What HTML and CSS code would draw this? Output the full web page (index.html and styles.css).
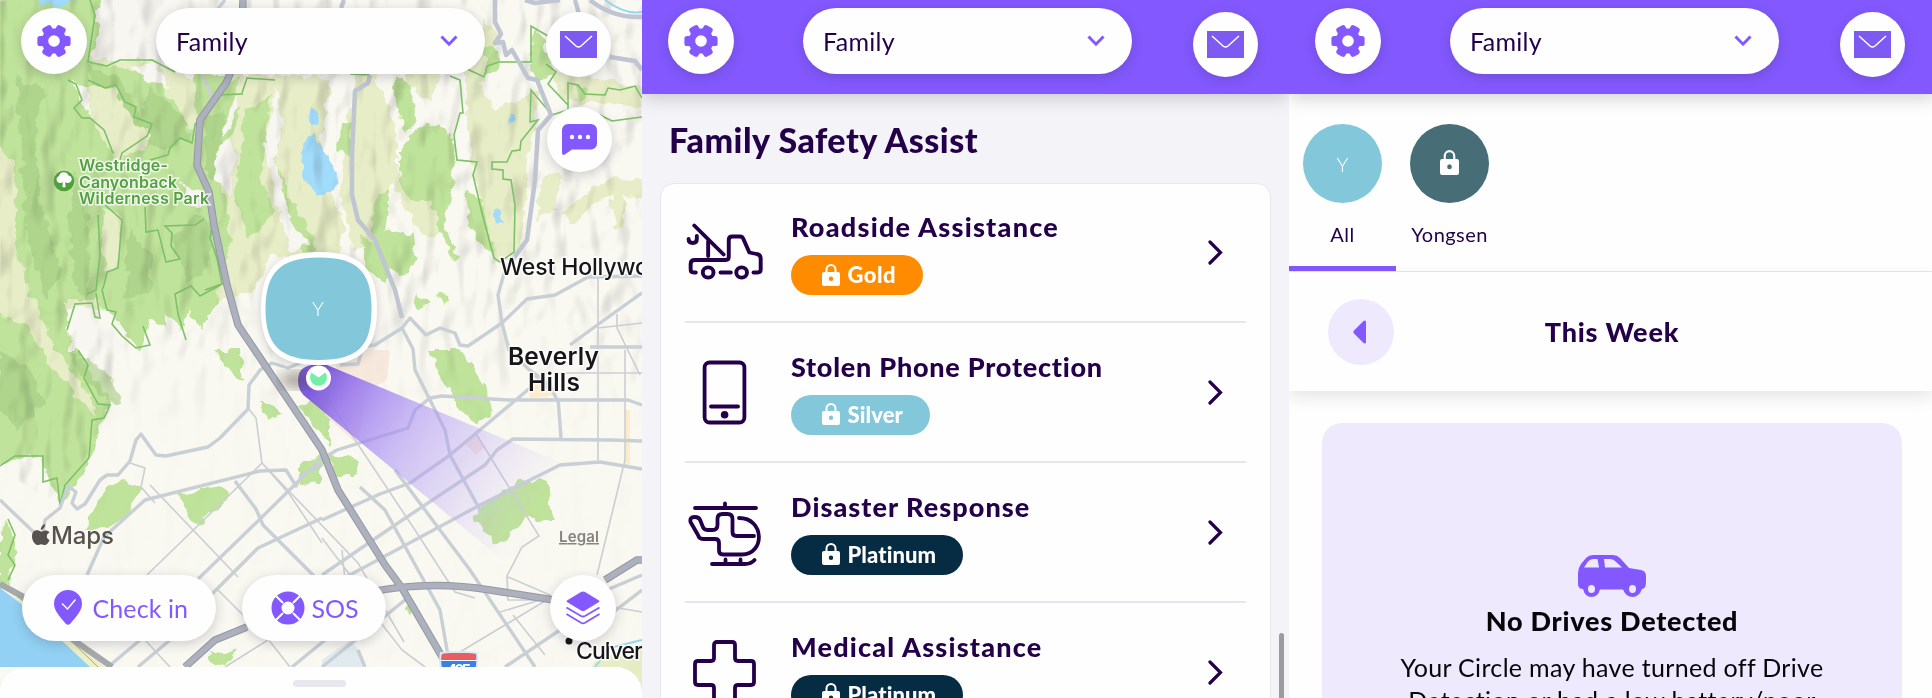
FILE: index.html
```html
<!DOCTYPE html>
<html lang="en">
<head>
<meta charset="utf-8">
<title>Family</title>
<link rel="stylesheet" href="styles.css">
</head>
<body>
<svg class="defs" width="0" height="0" aria-hidden="true">
  <symbol id="gear" viewBox="-17 -17 34 34">
    <g fill="#8359ff"><circle r="12.500"/>
      <rect x="-5" y="-16.600" width="10" height="33.200" rx="2.600" transform="rotate(90)"/>
      <rect x="-5" y="-16.600" width="10" height="33.200" rx="2.600" transform="rotate(30)"/>
      <rect x="-5" y="-16.600" width="10" height="33.200" rx="2.600" transform="rotate(150)"/></g>
    <circle r="5.800" fill="#fff"/>
  </symbol>
  <symbol id="mail" viewBox="0 0 37 27"><rect width="37" height="27" fill="#7d5af2"/><path d="M5 5l11 10q2.500 2 5 0L32 5" fill="none" stroke="#fff" stroke-width="1.500"/></symbol>
  <symbol id="down" viewBox="0 0 18 12"><path d="M1.500 1.500L9 9.200l7.500-7.700" fill="none" stroke="#8359ff" stroke-width="3"/></symbol>
  <symbol id="next" viewBox="0 0 15 25"><path d="M2 2l10.500 10.500L2 23" fill="none" stroke="#230049" stroke-width="3.200" stroke-linecap="round"/></symbol>
  <symbol id="lock" viewBox="0 0 18 22"><rect y="8" width="18" height="14" rx="2" fill="#fff"/><path d="M4.500 9V5.500a4.500 4.500 0 0 1 9 0V9" fill="none" stroke="#fff" stroke-width="2"/><circle class="hole" cx="9" cy="14.800" r="2.200"/></symbol>
</svg>
<main class="screens">
  <section class="screen map-screen">
    <svg class="map" width="642" height="698" viewBox="0 0 642 698">
      <defs>
        <filter id="rough" filterUnits="userSpaceOnUse" x="-30" y="-30" width="702" height="758"><feTurbulence type="fractalNoise" baseFrequency="0.09" numOctaves="2" seed="4"/><feDisplacementMap in="SourceGraphic" scale="12" xChannelSelector="R" yChannelSelector="G"/></filter>
        <filter id="relief" x="0" y="0" width="100%" height="100%" color-interpolation-filters="sRGB"><feTurbulence type="fractalNoise" baseFrequency="0.04 0.022" numOctaves="2" seed="9"/><feDiffuseLighting surfaceScale="11" diffuseConstant="1.200" lighting-color="#fff"><feDistantLight azimuth="215" elevation="58"/></feDiffuseLighting></filter>
        <filter id="soft"><feGaussianBlur stdDeviation="6"/></filter>
        <linearGradient id="cone" gradientUnits="userSpaceOnUse" x1="318" y1="379" x2="532" y2="515"><stop stop-color="#7f5cdc"/><stop offset=".14" stop-color="#9573ee" stop-opacity=".85"/><stop offset=".4" stop-color="#a990f6" stop-opacity=".58"/><stop offset="1" stop-color="#c4b2ff" stop-opacity="0"/></linearGradient>
        <linearGradient id="fade" x1="0" y1="0" x2="0" y2="1"><stop offset=".38" stop-color="#fff"/><stop offset=".62" stop-color="#111"/></linearGradient>
        <mask id="hills"><rect width="642" height="698" fill="url(#fade)"/><path d="M0 300H60L120 360 110 410 60 505 0 470z" fill="#fff"/><path d="M0 0H330V250H0z" fill="#fff"/></mask>
      </defs>
      <rect width="642" height="698" fill="#f9f8f1"/>
      <g filter="url(#rough)">
        <path d="M-25-25H105V10H-25z" fill="#bfe39a"/>
        <g fill="#e7edc6">
          <path d="M-25 0H90L95 60 150 60 190 80 235 75 300 75 330 80 320 150 345 230 330 280 300 260 270 255 255 290 225 300 200 300 170 310 110 310 60 310 100 420 80 420 -25 300z"/>
          <path d="M355 75L375 75 395 120 400 180 430 180 440 230 425 240 390 180 385 240 355 250 340 190z"/>
          <path d="M400 55L440 75 430 105 405 80zM485 20L500 40 480 80 495 110 540 90 530 150 520 250 495 265 470 160 465 80z"/>
          <path d="M550 70L665 90 665 110 560 100zM540 180L560 172 555 210 538 220zM560 215L590 190 610 178 665 180 665 205 625 195 625 225 615 228 610 195 590 205 575 225z"/>
          <path d="M595 660L665 640 665 720 580 720z"/>
        </g>
        <g fill="#bfe39a">
          <path d="M-25 20L15-5H88L100 30 88 62 150 75 180 110 195 140 195 70 240 80 235 110 200 105 200 200 215 250 220 300 200 330 190 310 180 330 150 320 140 350 115 320 98 300 66 300 68 340 85 360 110 402 100 425 88 465 62 505 45 475 40 455 -25 470V300L30 330 50 345 25 290 15 230 15 160 -25 145z"/>
          <path d="M200 95L235 95 240 120 215 170 225 200 230 240 218 285 208 240 197 180z"/>
          <path d="M245 110L270 95 262 180 275 210 250 240 235 200 240 150zM275 160L290 200 320 250 310 255 285 230zM340 125L352 122 350 155 338 150z"/>
          <path d="M395 75L410 85 418 120 405 135 395 100zM415 130L440 122 455 140 452 190 445 220 458 260 455 265 440 230 430 200 410 200 400 185 400 150z"/>
          <path d="M378 190L390 190 385 230 415 235 418 260 400 275 380 260 370 225zM360 235L375 240 392 270 385 282 365 270z"/>
          <path d="M465 190L480 200 490 240 495 255 485 250 470 225zM485 45L498 50 500 70 485 75zM535 28L548 50 555 75 540 80 530 70zM575 85L590 90 578 100z"/>
          <path d="M415 295L430 302 420 308zM437 295L448 296 447 305z"/>
          <path d="M428 350L460 350 485 385 492 410 475 425 460 410 445 385zM215 350L240 350 243 380 230 370z"/>
          <path d="M105 485L120 480 142 488 118 525 85 530zM178 495L220 484 230 495 200 525 190 520zM260 405L275 403 280 415 270 420zM300 465L322 455 322 480 300 485zM298 405L330 395 330 445z"/>
          <path d="M0 530L8 520 15 545 10 585 0 590zM210 650L235 652 225 665 212 662zM472 515L520 480 550 480 550 510 555 520 525 520 495 545zM403 610L413 605 410 615zM330 455L360 460 355 475 335 475z"/>
        </g>
        <g fill="#a5cc83" opacity=".6">
          <path d="M15 75L45 90 35 130 40 200 60 270 45 300 25 230 22 150zM88 65L115 75 140 110 150 145 125 150 110 120 95 95zM150 85L185 120 190 140 155 150 138 125zM75 170L90 230 88 300 75 285 68 220zM130 230L150 255 150 290 125 300z"/>
          <path d="M170 240L195 215 215 225 205 270 190 285zM0 350L30 370 45 400 20 430 0 410zM70 350L110 375 122 405 105 400 80 375zM205 120L225 110 220 180 205 180z"/>
        </g>
        <path d="M82 85L115 88 135 125 150 133 145 150 125 155 120 165 95 125zM105 205L122 222 116 268 105 272 102 240zM0 145L12 165 14 240 30 290 52 345 90 395 95 415 80 400 55 372 40 345 0 300z" fill="#e7edc6"/>
        <g fill="#f8f6f1">
          <path d="M100-25H245L235 60 180 65 150 58 98 60 102 25zM128 68L155 62 170 90 150 82z"/>
          <path d="M72 82L85 85 92 112 84 108zM230 140L235 155 230 195 215 180 220 145zM240 95L230 130 222 138 230 105z"/>
          <path d="M275 85L282 120 275 160 290 220 310 245 290 250 275 200 265 150zM75 308L93 305 100 325 110 325 130 350 70 350zM165 315L180 325 178 340 165 330zM182 184L200 190 210 205 190 206z"/>
        </g>
        <g fill="#a2dcfb"><path d="M32-10H80L65 8 45 5zM308 112L315 106 318 122 310 125zM302 145L314 132 325 155 336 170 335 190 320 196 305 180zM507 118L512 114 514 122 508 124zM494 208L502 210 505 223 497 222z"/></g>
      </g>
      <rect width="642" height="698" class="relief" filter="url(#relief)" mask="url(#hills)"/>
      <g id="edges" class="boundary">
        <path d="M90 0L95 15 88 62 107 66 120 60 152 60 175 72M205 290L222 284M242 93L247 78 275 80M350 74L370 75"/>
        <path d="M88 80L105 88 116 85 125 102 136 107 134 117 152 124 147 136 122 153 120 160M68 80L76 84 82 100 74 108 82 118 90 118 104 130 113 153M150 160L168 155 170 148 180 138 192 143 195 125 215 95 243 94"/>
        <path d="M98 215L100 255 96 290 87 294M105 205L122 220 118 268 107 272 104 285 102 290 107 310 116 312 112 324 122 336 136 348 150 345 143 326M145 207L146 232 158 230 166 262 180 259 171 246 172 233 165 226 195 225 204 219M215 210L210 238 217 258 222 284 200 296 191 286 175 294 178 314 186 340M67 330L75 304 92 303 95 317 100 318 96 293"/>
        <path d="M450 76L460 80 463 113 460 113 454 135 457 160 477 162 473 175 482 213 494 258 500 262 514 252 515 205 511 180 503 179 503 170 492 169 492 162 507 162 512 151 520 150 521 141 538 120 530 122 531 90 552 115 568 110 568 83 578 85 585 94 605 95 608 88 620 90 635 86 642 98M465 68L484 77 487 66 499 62 531 62 531 26 548 36M546 64L556 72 548 84 568 105M600 115L612 121 642 117"/>
        <path d="M78 350L88 365 84 378 98 404 110 405 104 418 92 420 89 458 65 485 60 505 57 478 43 482 43 456 15 456 0 466M8 519L15 535 8 555 15 565 8 580M0 590L85 667"/>
      </g>
      <use href="#edges" class="halo"/>
      <path d="M0 588L50 625 92 667 0 667z" fill="#92d1f3"/><path d="M0 585L65 633 105 667H90L45 625z" fill="#eeedc8"/><path d="M0 583L60 630 98 667" fill="none" stroke="#8ab974"/>
      <path d="M322 660L350 640 358 650 363 667H322z" fill="#e1ebef"/>
      <path d="M340 350L390 350 387 380 365 392 358 445 325 415z" fill="#f6e4d5" opacity=".75"/>
      <path d="M466 445L475 433 485 447 476 455z" fill="#f6e4d5"/><path d="M625 410h5v55h-5zM528 385l15-8 12 18-25 3z" fill="#fdeccb"/>
      <path d="M605 0Q625 15 642 12M595 667L610 648 642 640" stroke="#94d7ef" stroke-width="2" fill="none"/>
      <g class="minor">
        <path d="M147 575L250 475 262 463M150 485L238 577M130 463L145 468 141 487 155 503M248 408L256 418 262 463 290 495 322 543M262 463L358 563 404 642M325 395L415 530 455 592 475 598M145 640L170 667M218 590L245 617M322 538L350 575M268 639L290 667M225 667L268 640M363 600L402 650 425 667M455 655L560 592M598 277V460M625 350V460L597 575M560 373H642M598 328L642 323M617 314V328L640 375M475 432L539 536 522 547 507 576 508 600H560M508 577L550 595 540 600 500 612M513 615L545 655M595 604L642 612M342 550L345 580 358 600"/>
      </g>
      <g class="street">
        <path d="M0 500L42 540 45 520 60 508 68 486 76 492 72 503 77 509 85 504 100 480 107 475 118 475 130 461 136 440 141 434 148 444 156 455 166 456 208 447 220 438 248 409 249 385 258 373 260 370 272 363 288 368 305 361 322 364"/>
        <path d="M87 575L104 537 145 500 260 471 286 470 296 486 302 475 322 465M322 520L380 494 410 483 450 455 530 388M195 582L260 519 320 460 337 450 408 428 415 410 430 398 442 396 508 400 628 400 642 405M211 595L258 548 322 518M235 481L256 509 263 525 315 577M360 487L385 510 440 610 450 667M395 470L470 570 535 667M108 667L140 640M138 667L170 640M292 667L325 640M322 575L395 525 485 465 497 450 513 439 610 440 642 441M322 590L480 505 560 465 600 462 642 469M322 667L405 600M505 667L560 630M558 398L561 438M557 400L550 385 530 370M560 610L642 575M590 630L642 590"/>
        <path d="M225 0L217 10M203 75L212 98M358 650L365 667M340 365L358 364 362 350M402 328L410 318 426 335 440 328 455 333 460 345 468 346 502 323 498 295 505 270M340 350L375 345 402 328M402 328L413 349 415 370 430 400 445 430 450 455 480 510M502 323L527 299 555 295 588 277 642 276M570 345L600 323 642 293M502 323L509 350 550 390M590 347H642"/>
      </g>
      <g class="main">
        <path d="M344 0L341 8M495 0L495 22 501 34 495 43 503 42 506 55 512 50 528 78 537 80 551 115 538 130 535 180 527 240 505 270M370 75L368 83 355 91 352 155 352 195 358 220 375 240 395 290 402 318M525 0L535 3 560 0M575 0L579 14M590 0Q612 18 642 17M610 57L635 61 642 70"/>
      </g>
      <g class="freeway-edge"><path d="M243 0L241 50 226 83 200 120 197 165 209 192 214 225 227 285 238 325 322 450 338 490 385 565 402 588 448 667M370 592Q430 580 490 590L560 601M185 667L215 640 247 627M605 580L637 560H642"/></g>
      <g class="freeway"><path d="M243 0L241 50 226 83 200 120 197 165 209 192 214 225 227 285 238 325 322 450 338 490 385 565 402 588 448 667M370 592Q430 580 490 590L560 601M185 667L215 640 247 627M605 580L637 560H642"/></g>
      <path d="M0 584L22 596 62 632 112 667" fill="none" stroke="#a5a9ac" stroke-width="6"/>
      <path d="M327 365L560 462Q585 490 505 562L307 398Q295 389 299 374Q303 362 327 365z" fill="url(#cone)"/>
      <ellipse cx="296" cy="380" rx="16" ry="9" fill="#443a30" opacity=".4" filter="url(#soft)"/>
      <path d="M319 252C361 252 377 269 377 309S361 365 319 365 261 349 261 309 277 252 319 252z" fill="#fff" class="pin"/>
      <path d="M319 257.500C358 257.500 371.500 272 371.500 309S358 360 319 360 265.500 345 265.500 309 280 257.500 319 257.500z" fill="#83c7da"/>
      <circle cx="318.500" cy="378" r="12.500" fill="#fff"/><path d="M311.500 372.500l7 5 7-5a8.500 8.500 0 1 1-14 0z" fill="#74efa6"/>
      <text x="312" y="316" class="initial">Y</text>
      <circle cx="64" cy="181" r="10.300" fill="#4f9f3d"/><path d="M57.500 182a3.700 3.700 0 0 1 1.500-6 5 5 0 0 1 9.500-.5 3.700 3.700 0 0 1 2 6.500q-3 2-5.400.300l.5 5h-3.200l.4-5q-2.600 1.600-5.300-.3z" fill="#fff"/>
      <g class="park"><text x="79" y="171" textLength="89">Westridge-</text><text x="79" y="187.500" textLength="98">Canyonback</text><text x="79" y="204" textLength="130">Wilderness Park</text></g>
      <g class="city"><text x="500" y="274.500" textLength="149">West Hollywo</text><text x="508" y="365" textLength="91">Beverly</text><text x="528" y="391" textLength="52">Hills</text><text x="576" y="659" textLength="67">Culver</text></g>
      <circle cx="569" cy="641" r="3.500" fill="#16151a"/>
      <path d="M441 653q18-2 36 0 1 8-1 20h-34q-3-12-1-20z" fill="#3b80e6" stroke="#dce8f5" stroke-width="2"/><path d="M442 654q17-2 34 0v6h-34z" fill="#e65e60"/><path d="M441 660.500h36" stroke="#fff"/>
      <text x="447" y="675" class="shield" textLength="24">405</text>
      <path d="M40.500 531.500C38 529.500 32 529.500 32 536.500c0 4 3 8.500 5.500 8.500 1.500 0 2-.8 3.700-.8s2 .8 3.800.8c2 0 3.800-3 4.500-5-3.600-1.700-3.500-6 0-7.600-2-2.600-5.500-2.400-7-1zM40.700 530c0-3 1.700-5.200 4.300-6 .2 3-1.700 5.500-4.300 6z" fill="#56534e"/>
      <text x="51" y="544" class="brand" textLength="63">Maps</text>
      <text x="559" y="542" class="legal" textLength="40">Legal</text>
    </svg>
    <div class="stack">
      <header class="bar"><span class="round"><svg width="34" height="34"><use href="#gear"/></svg></span><div class="picker"><span>Family</span><svg width="18" height="12"><use href="#down"/></svg></div><span class="round low"><svg width="37" height="27"><use href="#mail"/></svg></span></header>
      <div class="chat-row"><span class="round"><svg width="35" height="31" viewBox="0 0 35 31"><path d="M6 0h23a6 6 0 0 1 6 6v13.500a6 6 0 0 1-6 6H10L2 31q-2 0-2-2V6a6 6 0 0 1 6-6z" fill="#8359ff"/><g fill="#fff"><circle cx="10" cy="13" r="2.200"/><circle cx="18" cy="13" r="2.200"/><circle cx="26" cy="13" r="2.200"/></g></svg></span></div>
      <div class="actions">
        <button class="pill check"><svg width="28" height="35" viewBox="0 0 28 35"><path d="M14 0a14 14 0 0 1 14 14c0 7-7 14-11.500 19.500q-2.500 2.500-5 0C7 28 0 21 0 14A14 14 0 0 1 14 0z" fill="#8359ff"/><path d="M8 13.500l5.500 5.500 8-9.500" fill="none" stroke="#fff" stroke-width="1.400"/></svg><span>Check in</span></button>
        <button class="pill sos"><svg width="34" height="34" viewBox="-17 -17 34 34"><circle r="11.500" fill="none" stroke="#8359ff" stroke-width="10"/><path d="M-12-12l7 7M12-12l-7 7M-12 12l7-7M12 12l-7-7" stroke="#fff" stroke-width="2"/></svg><span>SOS</span></button>
        <button class="round layers"><svg width="34" height="34" viewBox="0 0 34 34"><path d="M17 .5q1 0 2 .6L33 9.500q1 .8 0 1.600L19 19.500q-2 1-4 0L1 11.100q-1-.8 0-1.600l14-8.400q1-.6 2-.6z" fill="#8359ff"/><path d="M.5 16.500L15 25q2 1 4 0l14.500-8.500M.5 23L15 31.800q2 1 4 0L33.500 23" fill="none" stroke="#8359ff" stroke-width="1.800"/></svg></button>
      </div>
      <div class="sheet"><i></i></div>
    </div>
  </section>

  <section class="screen safety">
    <header class="bar solid"><span class="round"><svg width="34" height="34"><use href="#gear"/></svg></span><div class="picker"><span>Family</span><svg width="18" height="12"><use href="#down"/></svg></div><span class="round low"><svg width="37" height="27"><use href="#mail"/></svg></span></header>
    <h1>Family Safety Assist</h1>
    <div class="card">
      <article><svg class="icon" width="78" height="66" viewBox="0 0 78 66"><g class="line" transform="translate(.5 0) scale(1.030 1)"><path d="M8.500 4.500L37 33.500M22 20V35M3 18q0 4 4 4t4-4V15M10 51.500H8q-3 0-3-3V43q0-4 4-4h30q3 0 3-3V19q0-3.500 3.500-3.500H53q2 0 3 2l6 14 7 1.500q4 .5 4 4.500V48.500q0 3-3 3H66M34 51.500H44"/><circle cx="22" cy="51.500" r="5.200"/><circle cx="54.500" cy="51.500" r="5.200"/></g></svg><div class="copy"><h2 class="t1">Roadside Assistance</h2><span class="badge gold"><svg width="18" height="22"><use href="#lock"/></svg>Gold</span></div><svg class="go" width="15" height="25"><use href="#next"/></svg></article>
      <article><svg class="icon" width="78" height="66" viewBox="0 0 78 66"><g class="line"><rect x="19.600" y="1.500" width="39.800" height="60" rx="5"/><path d="M26 45.500H53"/></g><circle cx="39.600" cy="53.800" r="3.800" fill="#230049"/></svg><div class="copy"><h2 class="t2">Stolen Phone Protection</h2><span class="badge silver"><svg width="18" height="22"><use href="#lock"/></svg>Silver</span></div><svg class="go" width="15" height="25"><use href="#next"/></svg></article>
      <article><svg class="icon" width="78" height="66" viewBox="0 0 78 66"><g class="line"><path d="M10 7H71M40 2.500V7M54 17C80 17 80 53.500 57 53.500H38q-4 0-4-4V42q0-4-4-4H18q-4 0-5-4L5.500 21q-1-5 4-5 5 0 6 4l2 5q1 4 5 4h5q5 0 5-5V18q0-5 5-5h5q5 0 5 5V31q0 4 4 4H69M27 63H60q6 0 9.500-4M40.500 58.500V63M55.500 58.500V63"/></g></svg><div class="copy"><h2 class="t3">Disaster Response</h2><span class="badge platinum"><svg width="18" height="22"><use href="#lock"/></svg>Platinum</span></div><svg class="go" width="15" height="25"><use href="#next"/></svg></article>
      <article><svg class="icon" width="78" height="66" viewBox="0 0 78 66"><g class="line"><path d="M32 1H47q3 0 3 3V17q0 3 3 3H66q3 0 3 3V41q0 3-3 3H53q-3 0-3 3V60q0 3-3 3H32q-3 0-3-3V47q0-3-3-3H13q-3 0-3-3V23q0-3 3-3H26q3 0 3-3V4q0-3 3-3z"/></g></svg><div class="copy"><h2 class="t4">Medical Assistance</h2><span class="badge platinum"><svg width="18" height="22"><use href="#lock"/></svg>Platinum</span></div><svg class="go" width="15" height="25"><use href="#next"/></svg></article>
    </div>
    <i class="scrollbar"></i>
  </section>

  <section class="screen drives">
    <header class="bar solid"><span class="round"><svg width="34" height="34"><use href="#gear"/></svg></span><div class="picker"><span>Family</span><svg width="18" height="12"><use href="#down"/></svg></div><span class="round low"><svg width="37" height="27"><use href="#mail"/></svg></span></header>
    <nav class="people"><div class="person active"><span class="avatar">Y</span><b>All</b></div><div class="person"><span class="avatar locked"><svg width="19" height="25" viewBox="0 0 18 22" preserveAspectRatio="none"><use href="#lock"/></svg></span><b>Yongsen</b></div></nav>
    <div class="week"><span class="back"><svg width="13" height="24" viewBox="0 0 13 24"><path d="M13 1.500V22.500q-1 1.500-2.500.5L1 13.500q-1.500-1.500 0-3L10.500 1Q12 0 13 1.500z" fill="#8359ff"/></svg></span><h2>This Week</h2></div>
    <div class="empty">
      <svg width="68" height="42" viewBox="0 0 68 42"><path fill-rule="evenodd" d="M15 0h20q4 0 7 3l9 10 12 2q5 1 5 6v6q0 7-4 7-3 8-9.500 8T45 34.500H22Q20 42 13.500 42T5 34Q0 34 0 29V18Q0 13 3 9L8 3q3-3 7-3zM6 12.500H21L19.500 4H15q-3 0-5 2.500zM27 12.500H44L37 6q-2-2-5-2h-6zM17 34a3.500 4 0 1 0-7 0 3.500 4 0 1 0 7 0zM58 34a3.500 4 0 1 0-7 0 3.500 4 0 1 0 7 0z" fill="#8359ff"/></svg>
      <h3>No Drives Detected</h3>
      <p><span>Your Circle may have turned off Drive</span><span>Detection or had a low battery/poor</span></p>
    </div>
  </section>
</main>
</body>
</html>
```
FILE: styles.css
```css
* { box-sizing: border-box; }
body { margin: 0; width: 1932px; height: 698px; overflow: hidden; font-family: Lato, "Liberation Sans", sans-serif; color: #230049; font-variant-ligatures: none; }
h1, h2, h3, p { margin: 0; }
svg { display: block; flex: none; overflow: visible; }
.defs { position: absolute; }
.screens { display: grid; grid-template-columns: 642px 647px 643px; height: 698px; }
.screen { position: relative; height: 698px; overflow: hidden; display: flex; flex-direction: column; }

.bar { display: flex; align-items: flex-start; width: 647px; height: 94px; padding: 8px 0 0 26px; flex: none; }
.solid { background: #8359ff; box-shadow: 0 3px 18px rgba(0, 0, 0, .2); position: relative; z-index: 1; }
.round { width: 66px; height: 66px; border-radius: 50%; background: #fefefe; display: flex; align-items: center; justify-content: center; flex: none; box-shadow: 0 3px 12px rgba(40, 30, 60, .2); }
.picker { width: 329px; height: 66px; margin-left: 69px; border-radius: 33px; background: #fefefe; box-shadow: 0 3px 12px rgba(40, 30, 60, .22); display: flex; align-items: center; justify-content: space-between; padding: 0 27px 0 20px; font-size: 25px; letter-spacing: .3px; }
.low { margin: 3.500px 0 0 61px; width: 65px; height: 65px; }
.hole { fill: currentColor; }

.map { position: absolute; inset: 0; }
.relief { mix-blend-mode: multiply; opacity: .2; }
.boundary { fill: none; stroke: #7cc068; stroke-width: 1.500; }
.halo { opacity: .16; stroke-width: 9px; }
.minor { fill: none; stroke: #cbced3; stroke-width: 1.600; }
.street { fill: none; stroke: #c8cfd5; stroke-width: 3.400; stroke-linejoin: round; }
.main { fill: none; stroke: #bfc5d1; stroke-width: 4.500; stroke-linejoin: round; }
.freeway-edge { fill: none; stroke: #9498a4; stroke-width: 7.500; }
.freeway { fill: none; stroke: #adb1bd; stroke-width: 5.500; }
.pin { filter: drop-shadow(0 2px 5px rgba(40, 30, 60, .2)); }
.initial { font-size: 20px; font-weight: 300; fill: #fff; }
.park { font: 600 16px Inter, sans-serif; fill: #54a044; stroke: #fff; stroke-width: 3px; stroke-opacity: .75; paint-order: stroke; }
.city { font: 600 24.500px Inter, sans-serif; fill: #17161a; stroke: #fff; stroke-width: 3px; stroke-opacity: .8; paint-order: stroke; }
.city text:first-child, .city text:last-child { font-weight: 500; font-size: 23px; }
.brand { font: 500 24px Inter, sans-serif; fill: #56534e; }
.legal { font: 600 15px Inter, sans-serif; fill: #85837e; text-decoration: underline; }
.shield { font: 700 15px Inter, sans-serif; fill: #fff; }

.stack { position: relative; display: flex; flex-direction: column; height: 698px; }
.map-screen .bar { margin-left: -5px; }
.chat-row { padding: 12.500px 30px 0 0; display: flex; justify-content: flex-end; }
.chat-row .round { width: 65px; height: 65px; }
.actions { margin-top: auto; display: flex; padding: 0 26px 26.500px 21.500px; }
.pill, .actions .round { border: 0; color: #8359ff; }
.pill { font: 400 25px Lato, sans-serif; height: 66px; border-radius: 33px; background: #fefefe; display: flex; align-items: center; box-shadow: 0 3px 12px rgba(40, 30, 60, .2); padding: 0; }
.check { width: 194px; padding-left: 32px; gap: 11px; letter-spacing: .1px; }
.sos { width: 144px; margin-left: 26px; padding-left: 29px; gap: 7px; }
.layers { margin-left: auto; padding: 0; }
.sheet { height: 31px; background: #fefefe; border-radius: 26px 26px 0 0; display: flex; justify-content: center; padding-top: 13px; flex: none; }
.sheet i { width: 53px; height: 7px; border-radius: 4px; background: #e9e7ee; margin-left: -4px; }

.safety { background: #f4f3f8; }
h1 { font-size: 34px; line-height: 42px; font-weight: 900; padding: 25px 0 0 27px; letter-spacing: .5px; }
.card { margin: 22px 18px 0; border: 1.500px solid #e8e6ef; border-radius: 14px; background: #fefefe; height: 600px; padding: 0 24px; flex: none; }
article { height: 140px; display: flex; align-items: flex-start; border-bottom: 2px solid #e7e6ee; }
article:first-child { height: 138.500px; }
.icon { margin-top: 38px; }
article:first-child .icon { margin-top: 37px; }
.line { fill: none; stroke: #230049; stroke-width: 3.800; stroke-linecap: round; stroke-linejoin: round; }
.copy { width: 429px; flex: none; padding: 27px 0 0 27px; }
article:first-child .copy { padding-top: 26px; }
.copy h2 { font-size: 27px; line-height: 34px; font-weight: 900; white-space: nowrap; padding-left: 1px; }
.t1 { letter-spacing: 1.250px; }
.t2 { letter-spacing: .75px; }
.t3 { letter-spacing: 1.050px; }
.t4 { letter-spacing: 1.200px; }
.badge { display: flex; width: max-content; height: 40px; margin: 11px 0 0 .5px; border-radius: 20px; padding: 0 27px 1px 31px; align-items: center; gap: 8px; font-size: 22px; font-weight: 900; color: #fff; }
.gold { background: #ff8c00; letter-spacing: .5px; }
.silver { background: #83c7da; letter-spacing: .1px; }
.platinum { background: #062c43; letter-spacing: .1px; }
.gold use { color: #ff8c00; }
.silver use { color: #83c7da; }
.platinum use { color: #062c43; }
.go { margin: 57px 0 0 16px; }
article:first-child .go { margin-top: 56px; }
.scrollbar { position: absolute; right: 5px; top: 633px; width: 5px; height: 80px; border-radius: 3px; background: #9b9b9d; }

.drives { background: #fefefe; }
.people { display: flex; height: 178px; border-bottom: 1.500px solid #e8e8ea; flex: none; }
.person { width: 107px; padding-top: 30px; display: flex; flex-direction: column; align-items: center; }
.active { border-bottom: 5.500px solid #8359ff; }
.avatar { width: 79px; height: 79px; border-radius: 50%; background: #83c7da; display: flex; align-items: center; justify-content: center; color: #fff; font-size: 20px; font-weight: 300; }
.locked { background: #476e77; color: #476e77; }
.locked svg { margin-top: -2px; }
.person b { font-weight: 400; font-size: 20px; line-height: 24px; margin-top: 19px; letter-spacing: .45px; }
.week { height: 119px; display: flex; align-items: center; flex: none; padding-left: 39px; box-shadow: 0 6px 16px rgba(0, 0, 0, .1); }
.back { width: 66px; height: 66px; border-radius: 50%; background: #efe9fe; display: flex; align-items: center; padding-left: 25px; }
.week h2 { font-size: 27px; font-weight: 900; width: 300px; margin-left: 68px; text-align: center; letter-spacing: .8px; }
.empty { margin: 31.500px 30px 0 33px; height: 400px; border-radius: 20px; background: #efe9fe; flex: none; display: flex; flex-direction: column; align-items: center; padding-top: 132px; color: #070509; }
h3 { font-size: 27px; line-height: 34px; font-weight: 900; margin-top: 7px; letter-spacing: .75px; }
.empty p { font-size: 25px; line-height: 33px; margin-top: 13px; text-align: center; letter-spacing: .33px; }
.empty p span { display: block; white-space: nowrap; }
```
